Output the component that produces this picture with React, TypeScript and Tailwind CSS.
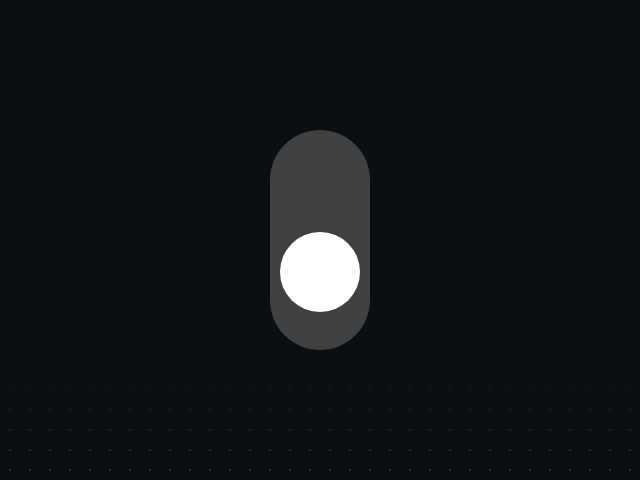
export default function App() {
  return (
    <div className="flex h-[480px] w-full items-center justify-center bg-[#0c0f12] bg-[image:linear-gradient(to_bottom,#0c0f12_70%,rgba(12,15,18,0.2)_100%),radial-gradient(circle,#33373a_1px,transparent_1.5px)] bg-[size:100%_100%,20px_20px]">
      <button
        type="button"
        aria-label="Toggle"
        className="flex h-[220px] w-[100px] flex-col items-center justify-end rounded-full bg-[#3f4142] pb-[38px]"
      >
        <span className="block h-20 w-20 rounded-full bg-white" />
      </button>
    </div>
  );
}
